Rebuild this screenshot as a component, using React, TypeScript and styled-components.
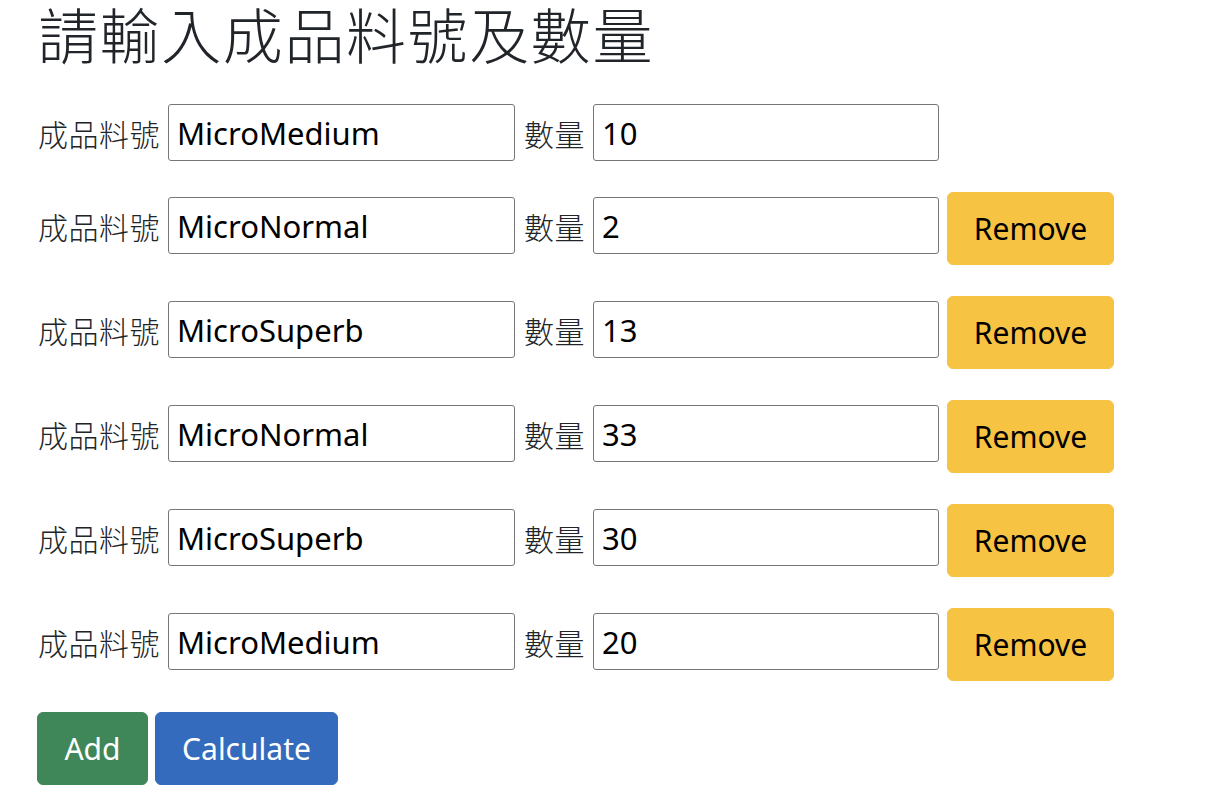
import React from "react";
import styled, { createGlobalStyle } from "styled-components";

const GlobalStyle = createGlobalStyle`
  html, body { margin: 0; padding: 0; background: #ffffff; }
  body {
    font-family: "Noto Sans", "Noto Sans CJK TC", sans-serif;
    color: #212529;
  }
  * { box-sizing: border-box; }
`;

const Page = styled.div`
  padding: 0 0 0 38px;
`;

const Title = styled.h1`
  margin: 0;
  font-family: "Noto Sans CJK TC", sans-serif;
  font-weight: 300;
  font-size: 60px;
  line-height: 66px;
  letter-spacing: 1.6px;
  color: #212529;
`;

const List = styled.div`
  margin-top: 38px;
  display: flex;
  flex-direction: column;
  gap: 31px;
`;

const Row = styled.div`
  display: flex;
  align-items: flex-start;
`;

const Fields = styled.div<{ $shift: boolean }>`
  display: flex;
  align-items: center;
  margin-top: ${(p) => (p.$shift ? "5px" : "0")};
`;

const Label = styled.label`
  font-family: "Noto Sans CJK TC", sans-serif;
  font-weight: 300;
  font-size: 30px;
  line-height: 40px;
  letter-spacing: 0.5px;
  color: #212529;
  margin-right: 8px;
  white-space: nowrap;
`;

const QtyLabel = styled(Label)`
  margin-left: 9px;
`;

const Input = styled.input<{ $w: number }>`
  width: ${(p) => p.$w}px;
  height: 57px;
  border: 1px solid #767676;
  border-radius: 3px;
  padding: 0 8px;
  font-family: "Noto Sans", "Noto Sans CJK TC", sans-serif;
  font-size: 31px;
  color: #000;
  background: #fff;
  outline: none;
`;

type Variant = "warning" | "success" | "primary";
const bg: Record<Variant, string> = {
  warning: "#f6c343",
  success: "#3f8759",
  primary: "#356bbd",
};

const Btn = styled.button<{ $variant: Variant; $w: number }>`
  width: ${(p) => p.$w}px;
  height: 73px;
  border: 1px solid ${(p) => bg[p.$variant]};
  background: ${(p) => bg[p.$variant]};
  color: ${(p) => (p.$variant === "warning" ? "#000" : "#fff")};
  border-radius: 6px;
  font-family: "Noto Sans", sans-serif;
  font-size: 30px;
  padding: 0;
  cursor: pointer;
`;

const RemoveBtn = styled(Btn)`
  margin-left: 8px;
`;

const Actions = styled.div`
  display: flex;
  gap: 7px;
  margin-left: -1px;
  margin-top: 31px;
`;

const rows = [
  { part: "MicroMedium", qty: "10" },
  { part: "MicroNormal", qty: "2" },
  { part: "MicroSuperb", qty: "13" },
  { part: "MicroNormal", qty: "33" },
  { part: "MicroSuperb", qty: "30" },
  { part: "MicroMedium", qty: "20" },
];

export default function App() {
  return (
    <Page>
      <GlobalStyle />
      <Title>請輸入成品料號及數量</Title>
      <List>
        {rows.map((r, i) => (
          <Row key={i}>
            <Fields $shift={i > 0}>
              <Label>成品料號</Label>
              <Input $w={347} defaultValue={r.part} />
              <QtyLabel>數量</QtyLabel>
              <Input $w={346} defaultValue={r.qty} />
            </Fields>
            {i > 0 && (
              <RemoveBtn $variant="warning" $w={167}>
                Remove
              </RemoveBtn>
            )}
          </Row>
        ))}
      </List>
      <Actions>
        <Btn $variant="success" $w={111}>
          Add
        </Btn>
        <Btn $variant="primary" $w={183}>
          Calculate
        </Btn>
      </Actions>
    </Page>
  );
}
